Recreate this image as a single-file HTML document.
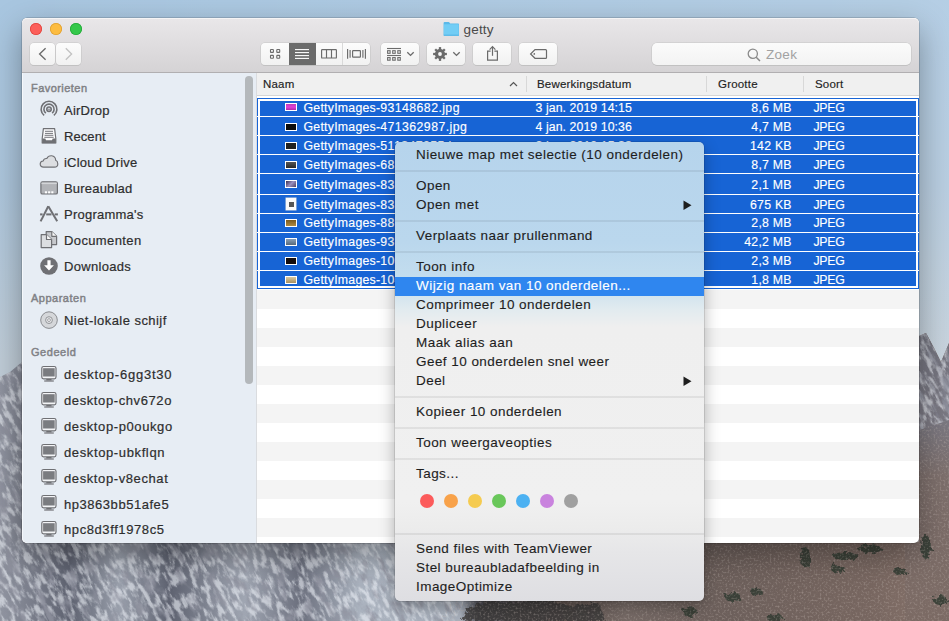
<!DOCTYPE html>
<html><head><meta charset="utf-8">
<style>
html,body{margin:0;padding:0;}
body{width:949px;height:621px;overflow:hidden;position:relative;font-family:"Liberation Sans",sans-serif;background:#a9c6df;}
.a{position:absolute;}
.t{position:absolute;white-space:nowrap;}
#wall{position:absolute;left:0;top:0;}
#win{position:absolute;left:22px;top:18px;width:897px;height:525px;border-radius:5px;overflow:hidden;box-shadow:0 0 0 0.5px rgba(0,0,0,.25),0 12px 32px rgba(0,0,0,.35);background:#fff;}
#tb{position:absolute;left:22px;top:18px;width:897px;height:54px;border-radius:5px 5px 0 0;background:linear-gradient(#e9e7e9,#d5d3d5);border-bottom:1px solid #b1afb1;box-shadow:inset 0 1px 0 rgba(255,255,255,.55);}
.tl{position:absolute;width:12px;height:12px;border-radius:50%;top:23px;}
.btn{position:absolute;top:43px;height:21.5px;border-radius:4px;background:linear-gradient(#fcfcfc,#f1f1f1);box-shadow:0 0 0 0.6px #c6c6c6,0 0.8px 0 #b5b5b5;}
#side{position:absolute;left:22px;top:73px;width:234px;height:470px;background:#e7edf4;box-shadow:inset 1px 0 0 rgba(255,255,255,.6);border-radius:0 0 0 5px;}
.sh{position:absolute;white-space:nowrap;left:31px;font-size:11px;font-weight:400;color:#808185;-webkit-text-stroke:0.45px #808185;}
.si{position:absolute;white-space:nowrap;left:64px;font-size:13px;color:#2e2e2e;-webkit-text-stroke:0.2px #2e2e2e;letter-spacing:0.15px;line-height:26px;}
.ic{position:absolute;left:40px;}
#hdr{position:absolute;left:257px;top:73px;width:662px;height:22px;background:#f0f0f0;border-bottom:1px solid #d6d6d6;}
.hc{position:absolute;white-space:nowrap;font-size:11.5px;color:#222;-webkit-text-stroke:0.15px #222;top:77px;line-height:14px;letter-spacing:0.2px;}
.hd{position:absolute;top:76px;width:1px;height:16px;background:#d8d8d8;}
.row{position:absolute;left:260px;width:656px;background:#1764d5;}
.rt{position:absolute;white-space:nowrap;font-size:12.3px;color:#fff;-webkit-text-stroke:0.15px #fff;letter-spacing:0.25px;line-height:15px;}
.stripe{position:absolute;left:257px;width:662px;background:#f4f4f4;}
#menu{position:absolute;left:395px;top:142px;width:309px;height:459px;border-radius:5px;overflow:hidden;
background:linear-gradient(#b6d4ec 0px,#bad7ed 100px,#c3ddee 135px,#cfe3ee 150px,#e2ebef 168px,#efefef 185px,#f0f0f0 360px,#ececec 385px,#e6e6e8 410px,#dedee2 459px);
box-shadow:0 0 0 0.5px rgba(0,0,0,.2),0 6px 16px rgba(0,0,0,.3);}
.mi{position:absolute;white-space:nowrap;left:21px;font-size:13.5px;color:#1a1a1a;-webkit-text-stroke:0.12px currentColor;letter-spacing:0.45px;line-height:19px;}
.ms{position:absolute;left:0;width:309px;height:2px;background:rgba(0,0,0,.065);}
.dot{position:absolute;width:14px;height:14px;border-radius:50%;top:352px;}
</style></head><body>
<svg id="wall" width="949" height="621" viewBox="0 0 949 621">
<defs>
<linearGradient id="sky" x1="0" y1="0" x2="0" y2="1">
<stop offset="0" stop-color="#a8c6e0"/><stop offset="0.3" stop-color="#adc6dc"/><stop offset="0.58" stop-color="#bfccd7"/><stop offset="1" stop-color="#c6cfd6"/>
</linearGradient>
<linearGradient id="skyr" x1="0" y1="0" x2="1" y2="0">
<stop offset="0" stop-color="#fff" stop-opacity="0"/><stop offset="1" stop-color="#fff" stop-opacity="0.15"/>
</linearGradient>
<linearGradient id="mtn" gradientUnits="userSpaceOnUse" x1="0" y1="0" x2="949" y2="0">
<stop offset="0.000" stop-color="#9094a0"/>
<stop offset="0.074" stop-color="#5e6270"/>
<stop offset="0.126" stop-color="#9aa0ac"/>
<stop offset="0.179" stop-color="#5e6270"/>
<stop offset="0.258" stop-color="#a0a6b2"/>
<stop offset="0.316" stop-color="#6c707e"/>
<stop offset="0.379" stop-color="#aab2be"/>
<stop offset="0.485" stop-color="#a8b0bc"/>
<stop offset="0.505" stop-color="#4a4a52"/>
<stop offset="0.590" stop-color="#5a4e4a"/>
<stop offset="0.660" stop-color="#766a66"/>
<stop offset="0.760" stop-color="#6c5f5b"/>
<stop offset="0.917" stop-color="#776660"/>
<stop offset="1.000" stop-color="#88746c"/>
</linearGradient>
<linearGradient id="rstrip" x1="0" y1="0" x2="0" y2="1">
<stop offset="0" stop-color="#72737e"/><stop offset="0.3" stop-color="#7a7882"/><stop offset="0.5" stop-color="#7d6f6c"/><stop offset="1" stop-color="#7b6a64"/>
</linearGradient>
<filter id="snow" x="0" y="0" width="100%" height="100%">
<feTurbulence type="fractalNoise" baseFrequency="0.22 0.08" numOctaves="5" seed="11" result="n"/>
<feColorMatrix in="n" type="matrix" values="0 0 0 0 0.86  0 0 0 0 0.89  0 0 0 0 0.94  4.5 0 0 0 -2.0" result="c"/>
<feComposite in="c" in2="SourceGraphic" operator="in"/>
</filter>
<filter id="rock" x="0" y="0" width="100%" height="100%">
<feTurbulence type="fractalNoise" baseFrequency="0.12 0.05" numOctaves="4" seed="4" result="n"/>
<feColorMatrix in="n" type="matrix" values="0 0 0 0 0.28  0 0 0 0 0.29  0 0 0 0 0.35  0 -4.5 0 0 2.15" result="c"/>
<feComposite in="c" in2="SourceGraphic" operator="in"/>
</filter>
<filter id="grit" x="0" y="0" width="100%" height="100%">
<feTurbulence type="fractalNoise" baseFrequency="0.5" numOctaves="2" seed="2" result="n"/>
<feColorMatrix in="n" type="matrix" values="0 0 0 0 0.6  0 0 0 0 0.52  0 0 0 0 0.48  0 0 -2 0 1.05" result="c"/>
<feComposite in="c" in2="SourceGraphic" operator="in"/>
</filter>
<filter id="blob" x="-50%" y="-50%" width="200%" height="200%">
<feTurbulence type="fractalNoise" baseFrequency="0.25" numOctaves="2" seed="9" result="t"/>
<feDisplacementMap in="SourceGraphic" in2="t" scale="8"/>
</filter>
<clipPath id="snowclip"><path d="M0 377 L10 372 L22 362 L300 330 L600 400 L919 336 L926 333 L934 348 L941 362 L949 343 L949 420 L919 430 L919 542 L490 542 L455 621 L0 621 Z"/></clipPath>
<clipPath id="brownclip"><path d="M470 542 L919 542 L919 430 L949 420 L949 621 L440 621 Z"/></clipPath>
</defs>
<rect width="949" height="621" fill="url(#sky)"/>
<rect width="949" height="621" fill="url(#skyr)"/>
<path d="M0 377 L10 372 L22 362 L300 330 L600 400 L919 336 L926 333 L934 348 L941 362 L949 343 L949 621 L0 621 Z" fill="url(#mtn)"/>
<path d="M919 336 L926 333 L934 348 L941 362 L949 343 L949 621 L905 621 L905 336 Z" fill="url(#rstrip)"/>
<g clip-path="url(#snowclip)">
<g transform="rotate(-28 300 560)">
<rect x="-200" y="200" width="1400" height="700" fill="#000" filter="url(#snow)" opacity="0.6"/>
<rect x="-200" y="200" width="1400" height="700" fill="#000" filter="url(#rock)" opacity="0.8"/>
</g>
</g>

<g fill="#323a32" opacity="0.85" filter="url(#blob)">
<path d="M462 621 L470 606 L490 601 L515 603 L540 598 L570 606 L598 603 L606 621 Z" fill="#3c3a3a"/>
<ellipse cx="805" cy="557" rx="5" ry="10"/><ellipse cx="846" cy="556" rx="13" ry="4"/><ellipse cx="838" cy="569" rx="7" ry="4"/><ellipse cx="870" cy="549" rx="12" ry="4"/><ellipse cx="926" cy="547" rx="5" ry="12"/><ellipse cx="900" cy="571" rx="7" ry="3"/>
<ellipse cx="733" cy="597" rx="8" ry="5"/><ellipse cx="756" cy="592" rx="6" ry="4"/><ellipse cx="775" cy="618" rx="8" ry="4"/><ellipse cx="690" cy="612" rx="7" ry="5"/><ellipse cx="940" cy="600" rx="7" ry="5"/>
</g><g clip-path="url(#brownclip)"><rect x="440" y="400" width="509" height="221" fill="#000" filter="url(#grit)" opacity="0.5"/></g>

</svg>

<div id="win"></div>
<div id="tb"></div>
<div class="tl" style="left:30px;background:#fc5f5a;box-shadow:inset 0 0 0 0.8px #e0443e;"></div>
<div class="tl" style="left:50px;background:#fdbc40;box-shadow:inset 0 0 0 0.8px #dea033;"></div>
<div class="tl" style="left:70px;background:#34c84a;box-shadow:inset 0 0 0 0.8px #25a83a;"></div>

<!-- title -->
<svg class="a" style="left:443px;top:21px" width="17" height="16" viewBox="0 0 17 16"><path d="M0.6 2 Q0.6 1 1.6 1 L6 1 L7.2 2.4 L15.2 2.4 Q16 2.4 16 3.2 L16 14.2 Q16 15 15.2 15 L1.4 15 Q0.6 15 0.6 14.2 Z" fill="#5bb9e9"/><rect x="0.9" y="3.2" width="14.8" height="11.5" rx="0.6" fill="#72cdf5"/><rect x="0.9" y="13.6" width="14.8" height="1.1" fill="#5ab7e6"/></svg>
<div class="t" style="left:463.5px;top:22px;font-size:13.5px;line-height:16px;color:#4a4a4a;letter-spacing:0.2px;">getty</div>

<!-- back/forward -->
<div class="btn" style="left:30px;width:25px;"></div>
<div class="btn" style="left:56px;width:25px;"></div>
<div class="btn" style="left:261px;width:109px;overflow:hidden;">
 <div class="a" style="left:28px;top:0;width:27px;height:22px;background:#6b6b6b;"></div>
 <div class="a" style="left:81px;top:0;width:1px;height:22px;background:#d9d9d9;"></div>
</div>
<div class="btn" style="left:381px;width:38px;"></div>
<div class="btn" style="left:427px;width:38px;"></div>
<div class="btn" style="left:473px;width:38px;"></div>
<div class="btn" style="left:519px;width:38px;"></div>
<svg class="a" style="left:0;top:0" width="949" height="72" viewBox="0 0 949 72">
<g fill="none" stroke-linecap="butt">
<path d="M45.6 48.2 L39.6 54 L45.6 59.8" stroke="#6a6a6a" stroke-width="1.35"/>
<path d="M65.8 48.2 L71.6 54 L65.8 59.8" stroke="#c2c2c2" stroke-width="1.35"/>
<g stroke="#6b6b6b" stroke-width="1.1">
<rect x="270.5" y="49.5" width="2.9" height="2.9" rx="0.5"/><rect x="276.8" y="49.5" width="2.9" height="2.9" rx="0.5"/><rect x="270.5" y="55.4" width="2.9" height="2.9" rx="0.5"/><rect x="276.8" y="55.4" width="2.9" height="2.9" rx="0.5"/>
</g>
<g stroke="#fff" stroke-width="1.1"><line x1="295" y1="49.6" x2="309" y2="49.6"/><line x1="295" y1="52.6" x2="309" y2="52.6"/><line x1="295" y1="55.6" x2="309" y2="55.6"/><line x1="295" y1="58.4" x2="309" y2="58.4"/></g>
<g stroke="#6b6b6b" stroke-width="1.15">
<rect x="321.6" y="49.6" width="14.8" height="8.4" rx="0.6"/><line x1="326.5" y1="49.6" x2="326.5" y2="58"/><line x1="331.5" y1="49.6" x2="331.5" y2="58"/>
<line x1="347.6" y1="49" x2="347.6" y2="58.8"/><line x1="350.1" y1="50" x2="350.1" y2="57.8"/><rect x="352.6" y="50.6" width="7.8" height="6.6" rx="0.5"/><line x1="362.9" y1="50" x2="362.9" y2="57.8"/><line x1="365.4" y1="49" x2="365.4" y2="58.8"/>
</g>
<g stroke="#6b6b6b" stroke-width="1.1">
<line x1="387" y1="48.5" x2="401" y2="48.5"/><line x1="387" y1="55.5" x2="401" y2="55.5"/>
<rect x="387.6" y="50.7" width="2.5" height="2.6"/><rect x="392.7" y="50.7" width="2.5" height="2.6"/><rect x="397.8" y="50.7" width="2.5" height="2.6"/>
<rect x="387.6" y="57.6" width="2.5" height="2.6"/><rect x="392.7" y="57.6" width="2.5" height="2.6"/><rect x="397.8" y="57.6" width="2.5" height="2.6"/>
</g>
<path d="M407.3 52.3 L410.5 55.4 L413.7 52.3" stroke="#6b6b6b" stroke-width="1.35"/>
<path d="M453.3 52.3 L456.5 55.4 L459.7 52.3" stroke="#6b6b6b" stroke-width="1.35"/>
<g stroke="#6b6b6b" stroke-width="1.2">
<path d="M490.6 51.2 L487.6 51.2 L487.6 60.2 L497.4 60.2 L497.4 51.2 L494.4 51.2"/>
<line x1="492.5" y1="46.8" x2="492.5" y2="55.8"/><path d="M489.6 49.6 L492.5 46.7 L495.4 49.6"/>
<path d="M535 49.6 L545.6 49.6 Q546.5 49.6 546.5 50.5 L546.5 57.4 Q546.5 58.3 545.6 58.3 L535 58.3 L530.6 53.95 Z"/>
</g>
</g>
<circle cx="534.3" cy="53.9" r="0.85" fill="#6b6b6b"/>
<g fill="#6b6b6b">
<circle cx="440" cy="54" r="5.1"/>
<g stroke="#6b6b6b" stroke-width="2.3"><line x1="440" y1="47.1" x2="440" y2="60.9"/><line x1="433.1" y1="54" x2="446.9" y2="54"/><line x1="435.2" y1="49.2" x2="444.8" y2="58.8"/><line x1="444.8" y1="49.2" x2="435.2" y2="58.8"/></g>
</g>
<circle cx="440" cy="54" r="1.9" fill="#f7f7f7"/>
</svg>

<!-- search -->
<div class="btn" style="left:652px;width:259px;top:43px;height:22px;border-radius:5px;background:linear-gradient(#fbfbfb,#f3f3f3);"></div>
<svg class="a" style="left:747px;top:48px" width="15" height="15"><circle cx="5.8" cy="5.8" r="4.6" fill="none" stroke="#8a8a8a" stroke-width="1.3"/><line x1="9.2" y1="9.2" x2="13" y2="13" stroke="#8a8a8a" stroke-width="1.5"/></svg>
<div class="t" style="left:766px;top:47px;font-size:13.5px;line-height:16px;color:#a2a2a2;letter-spacing:0.3px;">Zoek</div>

<!-- sidebar -->
<div id="side"></div>
<div class="a" style="left:256px;top:73px;width:1px;height:470px;background:#dadcdf;"></div>
<div class="a" style="left:245px;top:76px;width:8px;height:308px;border-radius:4px;background:#b4b8bb;"></div>
<div class="sh" style="top:82.36px;line-height:13px;letter-spacing:0.45px">Favorieten</div>
<div class="si" style="top:98.10px;letter-spacing:0.24px">AirDrop</div>
<svg class="ic" style="left:39px;top:99.9px" width="20" height="20" viewBox="0 0 20 20"><g fill="none" stroke="#6f7074" stroke-width="1.6"><path d="M5.14 15.42 A7.9 7.9 0 1 1 14.86 15.42"/><path d="M6.86 13.22 A5.1 5.1 0 1 1 13.14 13.22"/><circle cx="10" cy="9.2" r="2.2"/></g><circle cx="10" cy="9.2" r="0.8" fill="#6f7074"/></svg>
<div class="si" style="top:124.10px;letter-spacing:0.07px">Recent</div>
<svg class="ic" style="left:39px;top:125.9px" width="20" height="20" viewBox="0 0 20 20"><path d="M4.4 2.6 L15.6 2.6 L16.8 12.5 L16.8 17 L3.2 17 L3.2 12.5 Z" fill="#fbfbfc" stroke="#6f7074" stroke-width="1.2" stroke-linejoin="round"/><g stroke="#6f7074" stroke-width="0.95"><line x1="6" y1="5.3" x2="14" y2="5.3"/><line x1="6" y1="7.4" x2="14" y2="7.4"/><line x1="5.6" y1="9.3" x2="14.4" y2="9.3"/><line x1="5.3" y1="11.3" x2="14.7" y2="11.3"/></g><path d="M3.2 12.6 L6.3 12.6 L7 14.2 L13 14.2 L13.7 12.6 L16.8 12.6 L16.8 17.2 L3.2 17.2 Z" fill="#6f7074"/></svg>
<div class="si" style="top:150.10px;letter-spacing:0.22px">iCloud Drive</div>
<svg class="ic" style="left:39px;top:151.9px" width="20" height="20" viewBox="0 0 20 20"><path d="M4.6 15.1 Q1.2 15.1 1.2 12.1 Q1.2 9.3 4.1 9 Q4.9 6.2 7.8 6.5 Q9.2 3.5 12.7 3.8 Q16.4 4.2 16.7 8.3 Q18.8 9.1 18.8 11.9 Q18.7 15.1 15.4 15.1 Z" fill="#dcdee1" stroke="#6f7074" stroke-width="1.15"/></svg>
<div class="si" style="top:176.10px;letter-spacing:0.19px">Bureaublad</div>
<svg class="ic" style="left:39px;top:177.9px" width="20" height="20" viewBox="0 0 20 20"><rect x="1.9" y="3.8" width="16.5" height="12.2" rx="1.6" fill="#b1b3b7" stroke="#6f7074" stroke-width="1.2"/><rect x="2.5" y="4.5" width="15.3" height="1.6" fill="#d3d5d8"/><g fill="#fff"><rect x="5.9" y="13.3" width="2.1" height="2"/><rect x="9.1" y="13.3" width="2.1" height="2"/><rect x="12.3" y="13.3" width="2.1" height="2"/></g></svg>
<div class="si" style="top:202.10px;letter-spacing:0.24px">Programma's</div>
<svg class="ic" style="left:39px;top:203.9px" width="20" height="20" viewBox="0 0 20 20"><g stroke="#6f7074" stroke-width="2" stroke-linecap="butt"><line x1="9.3" y1="2.2" x2="1.6" y2="17.4"/><line x1="9.3" y1="2.2" x2="18.2" y2="17.3"/><line x1="1.1" y1="10.4" x2="3.6" y2="10.4"/><line x1="7.2" y1="10.4" x2="12.5" y2="10.4"/><line x1="15.7" y1="10.4" x2="18.9" y2="10.4"/></g></svg>
<div class="si" style="top:228.10px;letter-spacing:0.38px">Documenten</div>
<svg class="ic" style="left:39px;top:229.9px" width="20" height="20" viewBox="0 0 20 20"><g stroke="#6f7074" stroke-width="1.2" stroke-linejoin="round"><path d="M7.2 1.6 L12.8 1.6 L17.6 6.3 L17.6 14.6 L7.2 14.6 Z" fill="#c6c8cc"/><path d="M12.8 1.6 L12.8 6.3 L17.6 6.3" fill="#fafafa"/><path d="M2.2 4.6 L7.5 4.6 L12.6 9.5 L12.6 17.6 L2.2 17.6 Z" fill="#dcdee1"/><path d="M7.5 4.6 L7.5 9.5 L12.6 9.5" fill="#fafafa"/></g></svg>
<div class="si" style="top:254.10px;letter-spacing:0.32px">Downloads</div>
<svg class="ic" style="left:39px;top:255.9px" width="20" height="20" viewBox="0 0 20 20"><circle cx="10" cy="10" r="8.8" fill="#6f7074"/><path d="M8.4 4.3 L11.6 4.3 L11.6 9.3 L14.9 9.3 L10 14.6 L5.1 9.3 L8.4 9.3 Z" fill="#fff"/></svg>
<div class="sh" style="top:292.26px;line-height:13px;letter-spacing:0.5px">Apparaten</div>
<div class="si" style="top:308.00px;letter-spacing:0.45px">Niet-lokale schijf</div>
<svg class="ic" style="left:39px;top:309.8px" width="20" height="20" viewBox="0 0 20 20"><circle cx="10" cy="10.1" r="8.3" fill="#d5d7da" stroke="#8a8c90" stroke-width="1"/><circle cx="10" cy="10.1" r="3.4" fill="#e6e7e9" stroke="#8a8c90" stroke-width="0.9"/><circle cx="10" cy="10.1" r="1.4" fill="#fff" stroke="#8a8c90" stroke-width="0.8"/></svg>
<div class="sh" style="top:345.76px;line-height:13px;letter-spacing:0.55px">Gedeeld</div>
<div class="si" style="top:362.10px;letter-spacing:0.76px">desktop-6gg3t30</div>
<svg class="ic" style="left:39px;top:363.9px" width="20" height="20" viewBox="0 0 20 20"><rect x="2.8" y="2.5" width="14.2" height="12.4" rx="1.8" fill="#f3f4f6" stroke="#6f7074" stroke-width="1.2"/><rect x="4.1" y="4.2" width="11.6" height="8.3" fill="#7a7c80"/><rect x="7.3" y="15" width="5.2" height="1.4" fill="#6f7074"/><rect x="5.2" y="16.4" width="9.6" height="1.2" fill="#6f7074"/></svg>
<div class="si" style="top:387.98px;letter-spacing:0.6px">desktop-chv672o</div>
<svg class="ic" style="left:39px;top:389.8px" width="20" height="20" viewBox="0 0 20 20"><rect x="2.8" y="2.5" width="14.2" height="12.4" rx="1.8" fill="#f3f4f6" stroke="#6f7074" stroke-width="1.2"/><rect x="4.1" y="4.2" width="11.6" height="8.3" fill="#7a7c80"/><rect x="7.3" y="15" width="5.2" height="1.4" fill="#6f7074"/><rect x="5.2" y="16.4" width="9.6" height="1.2" fill="#6f7074"/></svg>
<div class="si" style="top:413.86px;letter-spacing:0.6px">desktop-p0oukgo</div>
<svg class="ic" style="left:39px;top:415.7px" width="20" height="20" viewBox="0 0 20 20"><rect x="2.8" y="2.5" width="14.2" height="12.4" rx="1.8" fill="#f3f4f6" stroke="#6f7074" stroke-width="1.2"/><rect x="4.1" y="4.2" width="11.6" height="8.3" fill="#7a7c80"/><rect x="7.3" y="15" width="5.2" height="1.4" fill="#6f7074"/><rect x="5.2" y="16.4" width="9.6" height="1.2" fill="#6f7074"/></svg>
<div class="si" style="top:439.74px;letter-spacing:0.62px">desktop-ubkflqn</div>
<svg class="ic" style="left:39px;top:441.5px" width="20" height="20" viewBox="0 0 20 20"><rect x="2.8" y="2.5" width="14.2" height="12.4" rx="1.8" fill="#f3f4f6" stroke="#6f7074" stroke-width="1.2"/><rect x="4.1" y="4.2" width="11.6" height="8.3" fill="#7a7c80"/><rect x="7.3" y="15" width="5.2" height="1.4" fill="#6f7074"/><rect x="5.2" y="16.4" width="9.6" height="1.2" fill="#6f7074"/></svg>
<div class="si" style="top:465.62px;letter-spacing:0.6px">desktop-v8echat</div>
<svg class="ic" style="left:39px;top:467.4px" width="20" height="20" viewBox="0 0 20 20"><rect x="2.8" y="2.5" width="14.2" height="12.4" rx="1.8" fill="#f3f4f6" stroke="#6f7074" stroke-width="1.2"/><rect x="4.1" y="4.2" width="11.6" height="8.3" fill="#7a7c80"/><rect x="7.3" y="15" width="5.2" height="1.4" fill="#6f7074"/><rect x="5.2" y="16.4" width="9.6" height="1.2" fill="#6f7074"/></svg>
<div class="si" style="top:491.50px;letter-spacing:0.54px">hp3863bb51afe5</div>
<svg class="ic" style="left:39px;top:493.3px" width="20" height="20" viewBox="0 0 20 20"><rect x="2.8" y="2.5" width="14.2" height="12.4" rx="1.8" fill="#f3f4f6" stroke="#6f7074" stroke-width="1.2"/><rect x="4.1" y="4.2" width="11.6" height="8.3" fill="#7a7c80"/><rect x="7.3" y="15" width="5.2" height="1.4" fill="#6f7074"/><rect x="5.2" y="16.4" width="9.6" height="1.2" fill="#6f7074"/></svg>
<div class="si" style="top:517.38px;letter-spacing:0.59px">hpc8d3ff1978c5</div>
<svg class="ic" style="left:39px;top:519.2px" width="20" height="20" viewBox="0 0 20 20"><rect x="2.8" y="2.5" width="14.2" height="12.4" rx="1.8" fill="#f3f4f6" stroke="#6f7074" stroke-width="1.2"/><rect x="4.1" y="4.2" width="11.6" height="8.3" fill="#7a7c80"/><rect x="7.3" y="15" width="5.2" height="1.4" fill="#6f7074"/><rect x="5.2" y="16.4" width="9.6" height="1.2" fill="#6f7074"/></svg>

<!-- header -->
<div id="hdr"></div>
<div class="hc" style="left:263px;">Naam</div>
<svg class="a" style="left:509px;top:81px" width="9" height="6"><path d="M1 5 L4.5 1.5 L8 5" fill="none" stroke="#555" stroke-width="1.2"/></svg>
<div class="hd" style="left:526px;"></div>
<div class="hc" style="left:537px;">Bewerkingsdatum</div>
<div class="hd" style="left:706px;"></div>
<div class="hc" style="left:718px;">Grootte</div>
<div class="hd" style="left:803px;"></div>
<div class="hc" style="left:815px;">Soort</div>

<div class="a" style="left:257px;top:98px;width:660px;height:189px;border:1px solid #1764d5;background:#fff;"></div>
<div class="row" style="top:101px;height:15px;"></div>
<div class="row" style="top:117px;height:18px;"></div>
<div class="a" style="left:257px;top:116px;width:662px;height:1px;background:#fff;"></div>
<div class="row" style="top:136px;height:18px;"></div>
<div class="a" style="left:257px;top:135px;width:662px;height:1px;background:#fff;"></div>
<div class="row" style="top:155px;height:18px;"></div>
<div class="a" style="left:257px;top:154px;width:662px;height:1px;background:#fff;"></div>
<div class="row" style="top:174px;height:20px;"></div>
<div class="a" style="left:257px;top:173px;width:662px;height:1px;background:#fff;"></div>
<div class="row" style="top:195px;height:18px;"></div>
<div class="a" style="left:257px;top:194px;width:662px;height:1px;background:#fff;"></div>
<div class="row" style="top:214px;height:18px;"></div>
<div class="a" style="left:257px;top:213px;width:662px;height:1px;background:#fff;"></div>
<div class="row" style="top:233px;height:18px;"></div>
<div class="a" style="left:257px;top:232px;width:662px;height:1px;background:#fff;"></div>
<div class="row" style="top:252px;height:18px;"></div>
<div class="a" style="left:257px;top:251px;width:662px;height:1px;background:#fff;"></div>
<div class="row" style="top:271px;height:15px;"></div>
<div class="a" style="left:257px;top:270px;width:662px;height:1px;background:#fff;"></div>
<div class="a" style="left:285px;top:103.4px;width:10px;height:6px;border:1px solid #fff;background:linear-gradient(#c03ab8,#e040d8 50%,#b02aa8);"></div>
<div class="rt" style="left:303.5px;top:100.63px;letter-spacing:0.25px">GettyImages-<span style="letter-spacing:0.42px">93148682.jpg</span></div>
<div class="rt" style="left:535.5px;top:100.63px;letter-spacing:0.08px">3 jan. 2019 14:15</div>
<div class="rt" style="right:157.2px;top:100.63px">8,6 MB</div>
<div class="rt" style="left:813.5px;top:100.63px;letter-spacing:-0.3px">JPEG</div>
<div class="a" style="left:285px;top:122.5px;width:10px;height:6px;border:1px solid #fff;background:#0c0c0c;"></div>
<div class="rt" style="left:303.5px;top:119.73px;letter-spacing:0.25px">GettyImages-<span style="letter-spacing:0.42px">471362987.jpg</span></div>
<div class="rt" style="left:535.5px;top:119.73px;letter-spacing:0.08px">4 jan. 2019 10:36</div>
<div class="rt" style="right:157.2px;top:119.73px">4,7 MB</div>
<div class="rt" style="left:813.5px;top:119.73px;letter-spacing:-0.3px">JPEG</div>
<div class="a" style="left:285px;top:141.7px;width:10px;height:6px;border:1px solid #fff;background:#222;"></div>
<div class="rt" style="left:303.5px;top:138.93px;letter-spacing:0.25px">GettyImages-<span style="letter-spacing:0.42px">511347055.jpg</span></div>
<div class="rt" style="left:535.5px;top:138.93px;letter-spacing:0.08px">2 jan. 2019 15:38</div>
<div class="rt" style="right:157.2px;top:138.93px">142 KB</div>
<div class="rt" style="left:813.5px;top:138.93px;letter-spacing:-0.3px">JPEG</div>
<div class="a" style="left:285px;top:161.0px;width:10px;height:6px;border:1px solid #fff;background:linear-gradient(#555,#2a2a2a);"></div>
<div class="rt" style="left:303.5px;top:158.23px;letter-spacing:0.25px">GettyImages-<span style="letter-spacing:0.42px">685203118.jpg</span></div>
<div class="rt" style="left:535.5px;top:158.23px;letter-spacing:0.08px">2 jan. 2019 15:40</div>
<div class="rt" style="right:157.2px;top:158.23px">8,7 MB</div>
<div class="rt" style="left:813.5px;top:158.23px;letter-spacing:-0.3px">JPEG</div>
<div class="a" style="left:285px;top:180.4px;width:10px;height:6px;border:1px solid #fff;background:linear-gradient(135deg,#3a3050,#9a90c0 50%,#504060);"></div>
<div class="rt" style="left:303.5px;top:177.63px;letter-spacing:0.25px">GettyImages-<span style="letter-spacing:0.42px">830542211.jpg</span></div>
<div class="rt" style="left:535.5px;top:177.63px;letter-spacing:0.08px">2 jan. 2019 15:41</div>
<div class="rt" style="right:157.2px;top:177.63px">2,1 MB</div>
<div class="rt" style="left:813.5px;top:177.63px;letter-spacing:-0.3px">JPEG</div>
<div class="a" style="left:286px;top:198.0px;width:10px;height:12px;background:#fafafa;box-shadow:0 0 0 0.5px #ddd;"></div><div class="a" style="left:288.5px;top:201.5px;width:5px;height:5px;background:#555;"></div>
<div class="rt" style="left:303.5px;top:197.73px;letter-spacing:0.25px">GettyImages-<span style="letter-spacing:0.42px">836714022.jpg</span></div>
<div class="rt" style="left:535.5px;top:197.73px;letter-spacing:0.08px">2 jan. 2019 15:41</div>
<div class="rt" style="right:157.2px;top:197.73px">675 KB</div>
<div class="rt" style="left:813.5px;top:197.73px;letter-spacing:-0.3px">JPEG</div>
<div class="a" style="left:285px;top:219.2px;width:10px;height:6px;border:1px solid #fff;background:linear-gradient(#7a5a20,#b08a40);"></div>
<div class="rt" style="left:303.5px;top:216.43px;letter-spacing:0.25px">GettyImages-<span style="letter-spacing:0.42px">880127544.jpg</span></div>
<div class="rt" style="left:535.5px;top:216.43px;letter-spacing:0.08px">2 jan. 2019 15:42</div>
<div class="rt" style="right:157.2px;top:216.43px">2,8 MB</div>
<div class="rt" style="left:813.5px;top:216.43px;letter-spacing:-0.3px">JPEG</div>
<div class="a" style="left:285px;top:237.9px;width:10px;height:6px;border:1px solid #fff;background:linear-gradient(#8aa0b8,#56687a);"></div>
<div class="rt" style="left:303.5px;top:235.13px;letter-spacing:0.25px">GettyImages-<span style="letter-spacing:0.42px">931203374.jpg</span></div>
<div class="rt" style="left:535.5px;top:235.13px;letter-spacing:0.08px">2 jan. 2019 15:43</div>
<div class="rt" style="right:157.2px;top:235.13px">42,2 MB</div>
<div class="rt" style="left:813.5px;top:235.13px;letter-spacing:-0.3px">JPEG</div>
<div class="a" style="left:285px;top:257.1px;width:10px;height:6px;border:1px solid #fff;background:#140d0d;"></div>
<div class="rt" style="left:303.5px;top:254.33px;letter-spacing:0.25px">GettyImages-<span style="letter-spacing:0.42px">1005321444.jpg</span></div>
<div class="rt" style="left:535.5px;top:254.33px;letter-spacing:0.08px">2 jan. 2019 15:44</div>
<div class="rt" style="right:157.2px;top:254.33px">2,3 MB</div>
<div class="rt" style="left:813.5px;top:254.33px;letter-spacing:-0.3px">JPEG</div>
<div class="a" style="left:285px;top:276.0px;width:10px;height:6px;border:1px solid #fff;background:linear-gradient(#d8c8a0,#a89060);"></div>
<div class="rt" style="left:303.5px;top:273.23px;letter-spacing:0.25px">GettyImages-<span style="letter-spacing:0.42px">1040572230.jpg</span></div>
<div class="rt" style="left:535.5px;top:273.23px;letter-spacing:0.08px">2 jan. 2019 15:45</div>
<div class="rt" style="right:157.2px;top:273.23px">1,8 MB</div>
<div class="rt" style="left:813.5px;top:273.23px;letter-spacing:-0.3px">JPEG</div>
<div class="stripe" style="top:290px;height:19px;"></div>
<div class="stripe" style="top:328px;height:19px;"></div>
<div class="stripe" style="top:366px;height:19px;"></div>
<div class="stripe" style="top:404px;height:19px;"></div>
<div class="stripe" style="top:442px;height:19px;"></div>
<div class="stripe" style="top:480px;height:19px;"></div>
<div class="stripe" style="top:518px;height:19px;"></div>

<div id="menu"><div class="mi" style="top:3.2px;color:#1e1e1e">Nieuwe map met selectie (10 onderdelen)</div>
<div class="ms" style="top:27.5px"></div>
<div class="mi" style="top:34.2px;color:#1e1e1e">Open</div>
<div class="mi" style="top:53.2px;color:#1e1e1e">Open met</div>
<svg class="a" style="left:288px;top:57.6px" width="9" height="11"><path d="M0.5 0.5 L8.5 5.25 L0.5 10 Z" fill="#1e1e1e"/></svg>
<div class="ms" style="top:77.5px"></div>
<div class="mi" style="top:84.2px;color:#1e1e1e">Verplaats naar prullenmand</div>
<div class="ms" style="top:108.5px"></div>
<div class="mi" style="top:115.2px;color:#1e1e1e">Toon info</div>
<div class="a" style="left:0;top:135px;width:309px;height:19px;background:#2f86ef;"></div>
<div class="mi" style="top:134.2px;color:#fff">Wijzig naam van 10 onderdelen...</div>
<div class="mi" style="top:153.2px;color:#1e1e1e">Comprimeer 10 onderdelen</div>
<div class="mi" style="top:172.2px;color:#1e1e1e">Dupliceer</div>
<div class="mi" style="top:191.2px;color:#1e1e1e">Maak alias aan</div>
<div class="mi" style="top:210.2px;color:#1e1e1e">Geef 10 onderdelen snel weer</div>
<div class="mi" style="top:229.2px;color:#1e1e1e">Deel</div>
<svg class="a" style="left:288px;top:233.6px" width="9" height="11"><path d="M0.5 0.5 L8.5 5.25 L0.5 10 Z" fill="#1e1e1e"/></svg>
<div class="ms" style="top:253.5px"></div>
<div class="mi" style="top:260.2px;color:#1e1e1e">Kopieer 10 onderdelen</div>
<div class="ms" style="top:284.5px"></div>
<div class="mi" style="top:291.2px;color:#1e1e1e">Toon weergaveopties</div>
<div class="ms" style="top:315.5px"></div>
<div class="mi" style="top:322.2px;color:#1e1e1e">Tags...</div>
<div class="dot" style="left:25px;top:352px;background:#fc5b5b;"></div>
<div class="dot" style="left:49px;top:352px;background:#f8a24a;"></div>
<div class="dot" style="left:73px;top:352px;background:#f5cb50;"></div>
<div class="dot" style="left:97px;top:352px;background:#69c75a;"></div>
<div class="dot" style="left:121px;top:352px;background:#4cb1f2;"></div>
<div class="dot" style="left:145px;top:352px;background:#c983de;"></div>
<div class="dot" style="left:169px;top:352px;background:#a0a0a0;"></div>
<div class="ms" style="top:390.5px"></div>
<div class="mi" style="top:397.2px;color:#1e1e1e">Send files with TeamViewer</div>
<div class="mi" style="top:416.2px;color:#1e1e1e">Stel bureaubladafbeelding in</div>
<div class="mi" style="top:435.2px;color:#1e1e1e">ImageOptimize</div></div>
</body></html>
